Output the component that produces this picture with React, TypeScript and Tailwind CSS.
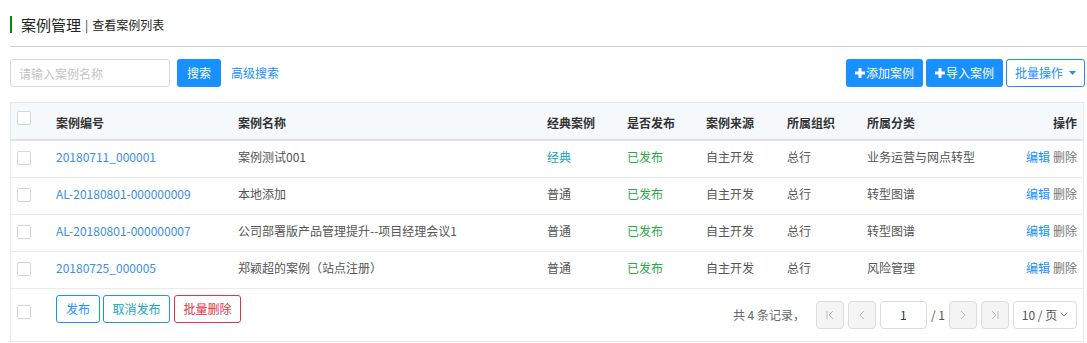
import React from "react";

type CaseRow = {
    code: string;
    name: string;
    classic: boolean;
    source: string;
    org: string;
    category: string;
};

const rows: CaseRow[] = [
    { code: "20180711_000001", name: "案例测试001", classic: true, source: "自主开发", org: "总行", category: "业务运营与网点转型" },
    { code: "AL-20180801-000000009", name: "本地添加", classic: false, source: "自主开发", org: "总行", category: "转型图谱" },
    { code: "AL-20180801-000000007", name: "公司部署版产品管理提升--项目经理会议1", classic: false, source: "自主开发", org: "总行", category: "转型图谱" },
    { code: "20180725_000005", name: "郑颖超的案例（站点注册）", classic: false, source: "自主开发", org: "总行", category: "风险管理" },
];

const CheckBox = () => <span className="block w-[14px] h-[14px] rounded-[2px] border border-[#d6d6d6] bg-white" />;

const PlusIcon = () => (
    <svg width="10" height="10" viewBox="0 0 10 10" className="mr-[1px]">
        <path d="M3.5 0h3v3.5H10v3H6.5V10h-3V6.5H0v-3h3.5z" fill="white" />
    </svg>
);

const PageBtn: React.FC<{ children: React.ReactNode }> = (props) => (
    <span className="w-[28px] h-[28px] flex items-center justify-center rounded-[4px] border border-[#dcdcdc] bg-[#f4f4f4] text-[#c0c0c0]">
        {props.children}
    </span>
);

export default function App() {
    return (
        <div
            className="w-[1087px] h-[343px] bg-white text-[12px] text-[#555] overflow-hidden"
            style={{ fontFamily: '"Noto Sans CJK SC", "Liberation Sans", sans-serif' }}
        >
            <div className="pl-[10px]">
                {/* title */}
                <div className="h-[47px] flex items-end pb-[13px] border-b border-[#cfcfcf]">
                    <div className="flex items-center h-[17px] border-l-[2px] border-[#0a8a0a] pl-[9px]">
                        <span className="text-[15px] text-[#222] leading-none">案例管理</span>
                        <span className="mx-[4px] text-[#333] text-[12px]">|</span>
                        <span className="text-[12px] text-[#222] leading-none">查看案例列表</span>
                    </div>
                </div>

                {/* toolbar */}
                <div className="flex items-center justify-between mt-[12px] pr-[2px]">
                    <div className="flex items-center">
                        <input
                            className="w-[160px] h-[28px] rounded-[3px] border border-[#d9d9d9] px-[8px] text-[12px] outline-none placeholder:text-[#c4c4c4]"
                            placeholder="请输入案例名称"
                        />
                        <button className="ml-[7px] w-[44px] h-[28px] rounded-[3px] bg-[#1890ff] text-white text-[12px]">搜索</button>
                        <a className="ml-[10px] text-[#1890ff] text-[12px]">高级搜索</a>
                    </div>
                    <div className="flex items-center gap-[3px]">
                        <button className="w-[77px] h-[28px] rounded-[3px] bg-[#1890ff] text-white text-[12px] flex items-center justify-center">
                            <PlusIcon />
                            添加案例
                        </button>
                        <button className="w-[77px] h-[28px] rounded-[3px] bg-[#1890ff] text-white text-[12px] flex items-center justify-center">
                            <PlusIcon />
                            导入案例
                        </button>
                        <button className="w-[79px] h-[28px] rounded-[3px] border border-[#1890ff] bg-white text-[#1890ff] text-[12px] flex items-center justify-center gap-[6px]">
                            批量操作
                            <svg width="7" height="4" viewBox="0 0 7 4">
                                <path d="M0 0h7L3.5 4z" fill="#1890ff" />
                            </svg>
                        </button>
                    </div>
                </div>

                {/* table */}
                <div className="mt-[15px] mr-[3px] border border-[#e9e9e9]">
                    <table className="w-full table-fixed border-collapse">
                        <colgroup>
                            <col className="w-[35px]" />
                            <col className="w-[182px]" />
                            <col className="w-[309px]" />
                            <col className="w-[80px]" />
                            <col className="w-[79px]" />
                            <col className="w-[81px]" />
                            <col className="w-[80px]" />
                            <col className="w-[140px]" />
                            <col />
                        </colgroup>
                        <thead>
                            <tr className="h-[37px] bg-[#f6f9fc] border-b-[2px] border-[#dfe3e8] text-[#333] font-bold text-left">
                                <th className="pl-[6px] align-top pt-[8px]">
                                    <CheckBox />
                                </th>
                                <th className="pl-[10px] pt-[4px]">案例编号</th>
                                <th className="pl-[10px] pt-[4px]">案例名称</th>
                                <th className="pl-[10px] pt-[4px]">经典案例</th>
                                <th className="pl-[10px] pt-[4px]">是否发布</th>
                                <th className="pl-[10px] pt-[4px]">案例来源</th>
                                <th className="pl-[10px] pt-[4px]">所属组织</th>
                                <th className="pl-[10px] pt-[4px]">所属分类</th>
                                <th className="pr-[6px] pt-[4px] text-right">操作</th>
                            </tr>
                        </thead>
                        <tbody>
                            {rows.map((r) => (
                                <tr key={r.code} className="h-[37px] border-b border-[#ebebeb]">
                                    <td className="pl-[6px] align-top pt-[10px]">
                                        <CheckBox />
                                    </td>
                                    <td className="pl-[10px] pb-[4px] text-[#3a8ee6]">{r.code}</td>
                                    <td className="pl-[10px] pb-[4px]">{r.name}</td>
                                    <td className={"pl-[10px] pb-[4px] " + (r.classic ? "text-[#17a2b8]" : "")}>
                                        {r.classic ? "经典" : "普通"}
                                    </td>
                                    <td className="pl-[10px] pb-[4px] text-[#28a745]">已发布</td>
                                    <td className="pl-[10px] pb-[4px]">{r.source}</td>
                                    <td className="pl-[10px] pb-[4px]">{r.org}</td>
                                    <td className="pl-[10px] pb-[4px]">{r.category}</td>
                                    <td className="pr-[6px] pb-[4px] text-right">
                                        <span className="text-[#1890ff]">编辑</span>
                                        <span className="ml-[3px] text-[#777]">删除</span>
                                    </td>
                                </tr>
                            ))}
                        </tbody>
                    </table>

                    {/* footer */}
                    <div className="h-[52px] flex items-start">
                        <div className="w-[35px] pl-[6px] pt-[16px]">
                            <CheckBox />
                        </div>
                        <div className="pl-[10px] pt-[6px] flex gap-[3px]">
                            <button className="w-[44px] h-[28px] rounded-[3px] border border-[#1890ff] text-[#1890ff] text-[12px]">发布</button>
                            <button className="w-[67px] h-[28px] rounded-[3px] border border-[#17a2b8] text-[#17a2b8] text-[12px]">取消发布</button>
                            <button className="ml-[1px] w-[67px] h-[28px] rounded-[3px] border border-[#dc3545] text-[#dc3545] text-[12px]">批量删除</button>
                        </div>
                        <div className="ml-auto pr-[6px] pt-[12px] flex items-center text-[12px] text-[#666]">
                            <span className="mr-[11px]">共 4 条记录，</span>
                            <div className="flex items-center gap-[4px]">
                                <PageBtn>
                                    <svg width="10" height="10" viewBox="0 0 10 10">
                                        <path d="M2 1v8M8 1L4 5l4 4" stroke="#bbb" fill="none" strokeWidth="1" />
                                    </svg>
                                </PageBtn>
                                <PageBtn>
                                    <svg width="10" height="10" viewBox="0 0 10 10">
                                        <path d="M7 1L3 5l4 4" stroke="#bbb" fill="none" strokeWidth="1" />
                                    </svg>
                                </PageBtn>
                                <input
                                    className="w-[47px] h-[28px] rounded-[4px] border border-[#dcdcdc] text-center text-[12px] text-[#333] outline-none"
                                    defaultValue="1"
                                />
                                <span className="text-[#555]">/ 1</span>
                                <PageBtn>
                                    <svg width="10" height="10" viewBox="0 0 10 10">
                                        <path d="M3 1l4 4-4 4" stroke="#bbb" fill="none" strokeWidth="1" />
                                    </svg>
                                </PageBtn>
                                <PageBtn>
                                    <svg width="10" height="10" viewBox="0 0 10 10">
                                        <path d="M2 1l4 4-4 4M8 1v8" stroke="#bbb" fill="none" strokeWidth="1" />
                                    </svg>
                                </PageBtn>
                                <span className="w-[64px] h-[28px] rounded-[4px] border border-[#dcdcdc] flex items-center justify-center gap-[3px] text-[#555]">
                                    10 / 页
                                    <svg width="8" height="5" viewBox="0 0 8 5">
                                        <path d="M1 1l3 3 3-3" stroke="#888" fill="none" strokeWidth="1" />
                                    </svg>
                                </span>
                            </div>
                        </div>
                    </div>
                </div>
            </div>
        </div>
    );
}
